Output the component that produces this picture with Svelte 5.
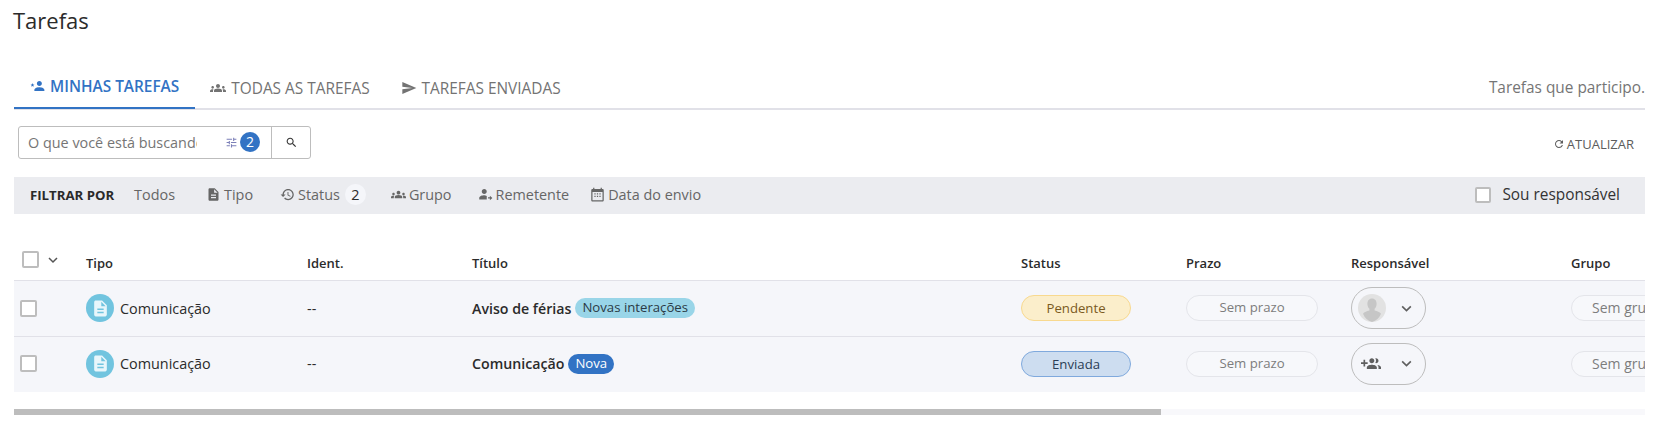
<script>
  const ICONS = {
    groups: 'M12 12.75c1.63 0 3.07.39 4.24.9 1.08.48 1.76 1.56 1.76 2.73V18H6v-1.61c0-1.18.68-2.26 1.76-2.73 1.17-.52 2.61-.91 4.24-.91zM4 13c1.1 0 2-.9 2-2s-.9-2-2-2-2 .9-2 2 .9 2 2 2zm1.13 1.1C4.76 14.04 4.39 14 4 14c-.99 0-1.93.21-2.78.58C.48 14.9 0 15.62 0 16.43V18h4.5v-1.61c0-.83.23-1.61.63-2.29zM20 13c1.1 0 2-.9 2-2s-.9-2-2-2-2 .9-2 2 .9 2 2 2zm4 3.43c0-.81-.48-1.53-1.22-1.85C21.93 14.21 20.99 14 20 14c-.39 0-.76.04-1.13.1.4.68.63 1.46.63 2.29V18H24v-1.57zM12 6c1.66 0 3 1.34 3 3s-1.34 3-3 3-3-1.34-3-3 1.34-3 3-3z',
    send: 'M2.01 21L23 12 2.01 3 2 10l15 2-15 2z',
    mine: 'M15 11c2.2 0 4-1.8 4-4s-1.8-4-4-4-4 1.8-4 4 1.8 4 4 4zm0 2c-2.7 0-8 1.3-8 4v2h16v-2c0-2.7-5.3-4-8-4zM4 6.5l.9 2.1 2.2.2-1.7 1.5.5 2.2L4 11.3l-1.9 1.2.5-2.2L.9 8.8l2.2-.2z',
    tune: 'M3 17v2h6v-2H3zM3 5v2h10V5H3zm10 16v-2h8v-2h-8v-2h-2v6h2zM7 9v2H3v2h4v2h2V9H7zm14 4v-2H11v2h10zm-6-4h2V7h4V5h-4V3h-2v6z',
    search: 'M15.5 14h-.79l-.28-.27C15.41 12.59 16 11.11 16 9.5 16 5.91 13.09 3 9.5 3S3 5.91 3 9.5 5.91 16 9.5 16c1.61 0 3.09-.59 4.23-1.57l.27.28v.79l5 4.99L20.49 19l-4.99-5zm-6 0C7.01 14 5 11.99 5 9.5S7.01 5 9.5 5 14 7.01 14 9.5 11.99 14 9.5 14z',
    refresh: 'M17.65 6.35C16.2 4.9 14.21 4 12 4c-4.42 0-7.99 3.58-7.99 8s3.57 8 7.99 8c3.73 0 6.84-2.55 7.73-6h-2.08c-.82 2.33-3.04 4-5.65 4-3.31 0-6-2.69-6-6s2.69-6 6-6c1.66 0 3.14.69 4.22 1.78L13 11h7V4l-2.35 2.35z',
    doc: 'M14 2H6c-1.1 0-1.99.9-1.99 2L4 20c0 1.1.89 2 1.99 2H18c1.1 0 2-.9 2-2V8l-6-6zm2 16H8v-2h8v2zm0-4H8v-2h8v2zm-3-5V3.5L18.5 9H13z',
    history: 'M13 3c-4.97 0-9 4.03-9 9H1l3.89 3.89.07.14L9 12H6c0-3.87 3.13-7 7-7s7 3.13 7 7-3.13 7-7 7c-1.93 0-3.68-.79-4.94-2.06l-1.42 1.42C8.27 19.99 10.51 21 13 21c4.97 0 9-4.03 9-9s-4.03-9-9-9zm-1 5v5l4.28 2.54.72-1.21-3.5-2.08V8H12z',
    sender: 'M10 11c2.2 0 4-1.8 4-4s-1.8-4-4-4-4 1.8-4 4 1.8 4 4 4zM10 13c-2.700 0-8 1.300-8 4v3h12v-5.600c-1.300-.9-2.800-1.400-4-1.400zM16 16.500h3V14l4 3.500-4 3.500v-2.500h-3z',
    calendar: 'M20 3h-1V1h-2v2H7V1H5v2H4c-1.1 0-2 .9-2 2v16c0 1.1.9 2 2 2h16c1.1 0 2-.9 2-2V5c0-1.1-.9-2-2-2zm0 18H4V8h16v13zM7 10h2v2H7zm4 0h2v2h-2zm4 0h2v2h-2zm-8 4h2v2H7zm4 0h2v2h-2zm4 0h2v2h-2z',
    groupAdd: 'M8 10H5V7H3v3H0v2h3v3h2v-3h3v-2zm10 1c1.66 0 2.99-1.34 2.99-3S19.66 5 18 5c-.32 0-.63.05-.91.13.57.81.9 1.79.9 2.87s-.34 2.05-.9 2.87c.28.08.59.13.91.13zm-5 0c1.66 0 2.99-1.34 2.99-3S14.66 5 13 5s-3 1.34-3 3 1.34 3 3 3zm6.62 2.16c.83.73 1.38 1.66 1.38 2.84v2h3v-2c0-1.54-2.37-2.49-4.38-2.84zM13 13c-2 0-6 1-6 3v2h12v-2c0-2-4-3-6-3z'
  };

  const tabs = [
    { label: 'MINHAS TAREFAS', icon: 'mine', active: true },
    { label: 'TODAS AS TAREFAS', icon: 'groups' },
    { label: 'TAREFAS ENVIADAS', icon: 'send' }
  ];

  const filters = [
    { label: 'Tipo', icon: 'doc', gap: 27 },
    { label: 'Status', icon: 'history', count: 2, gap: 25 },
    { label: 'Grupo', icon: 'groups', gap: 26 },
    { label: 'Remetente', icon: 'sender', gap: 21 },
    { label: 'Data do envio', icon: 'calendar' }
  ];

  const rows = [
    { title: 'Aviso de férias', badge: 'Novas interações', badgeKind: 'info', status: 'Pendente', statusKind: 'pending', avatar: true },
    { title: 'Comunicação', badge: 'Nova', badgeKind: 'new', status: 'Enviada', statusKind: 'sent', avatar: false }
  ];
</script>

{#snippet icon(name, size)}
  <svg class="icon" width={size} height={size} viewBox="0 0 24 24" fill="currentColor"><path d={ICONS[name]} /></svg>
{/snippet}

{#snippet chevron()}
  <svg class="chev" width="12" height="12" viewBox="0 0 12 12" fill="none" stroke="currentColor" stroke-width="1.5"><path d="M2 4l4 4 4-4" /></svg>
{/snippet}

<div class="page">
  <h1>Tarefas</h1>

  <div class="tabs">
    {#each tabs as t}
      <div class="tab" class:active={t.active}>
        {@render icon(t.icon, t.active ? 15 : 16)}
        <span>{t.label}</span>
      </div>
    {/each}
    <div class="tabs__hint">Tarefas que participo.</div>
  </div>

  <div class="toolbar">
    <div class="search">
      <div class="search__field">
        <span class="search__text">O que você está buscando?</span>
        <span class="search__tune">{@render icon('tune', 13)}</span>
        <span class="search__count">2</span>
      </div>
      <div class="search__btn">{@render icon('search', 13)}</div>
    </div>
    <div class="refresh">{@render icon('refresh', 12)}<span>ATUALIZAR</span></div>
  </div>

  <div class="filters">
    <strong>FILTRAR POR</strong>
    <span class="filters__all">Todos</span>
    {#each filters as f}
      <span class="filter" style="margin-right: {f.gap ?? 0}px">
        {@render icon(f.icon, 15)}
        <span>{f.label}</span>
        {#if f.count}<span class="filter__count">{f.count}</span>{/if}
      </span>
    {/each}
    <label class="filters__mine"><span class="check"></span>Sou responsável</label>
  </div>

  <div class="table">
    <div class="row head">
      <div class="cell cell--check"><span class="check check--head"></span>{@render chevron()}</div>
      <div class="cell">Tipo</div>
      <div class="cell">Ident.</div>
      <div class="cell">Título</div>
      <div class="cell">Status</div>
      <div class="cell">Prazo</div>
      <div class="cell">Responsável</div>
      <div class="cell">Grupo</div>
    </div>
    {#each rows as r}
      <div class="row body">
        <div class="cell cell--check"><span class="check"></span></div>
        <div class="cell tipo">
          <span class="tipo__icon">{@render icon('doc', 19)}</span>Comunicação
        </div>
        <div class="cell">--</div>
        <div class="cell titulo">
          <span class="titulo__text">{r.title}</span>
          <span class="badge badge--{r.badgeKind}">{r.badge}</span>
        </div>
        <div class="cell"><span class="pill status status--{r.statusKind}">{r.status}</span></div>
        <div class="cell"><span class="pill muted">Sem prazo</span></div>
        <div class="cell">
          <div class="owner">
            {#if r.avatar}
              <svg class="avatar" width="28" height="28" viewBox="0 0 28 28">
                <circle cx="14" cy="14" r="14" fill="#e2e2e2" />
                <path d="M14 4.500c3 0 4.600 2.400 4.600 5.200 0 2.200-.8 4-2 5.100v1.800c2.600.7 5 1.600 6.400 3.200A14 14 0 0 1 14 28a14 14 0 0 1-9-8.200c1.400-1.600 3.800-2.500 6.400-3.200v-1.800c-1.200-1.100-2-2.900-2-5.100 0-2.800 1.600-5.200 4.600-5.200z" fill="#c6c6c6" />
              </svg>
            {:else}
              <span class="owner__add">{@render icon('groupAdd', 20)}</span>
            {/if}
            {@render chevron()}
          </div>
        </div>
        <div class="cell"><span class="pill muted pill--group">Sem grupo</span></div>
      </div>
    {/each}
  </div>

  <div class="scrollbar"><div class="scrollbar__thumb"></div></div>
</div>

<style>
  :global(body) { margin: 0; background: #fff; }
  .page {
    width: 1631px;
    padding-left: 14px;
    font-family: "Open Sans", sans-serif;
    color: #2b2b2b;
    overflow: hidden;
    height: 421px;
  }
  .icon { flex-shrink: 0; display: block; }

  h1 {
    margin: 0 0 0 -1px;
    height: 66px;
    padding-top: 5px;
    box-sizing: border-box;
    font-size: 22px;
    line-height: 30px;
    font-weight: 400;
  }

  .tabs {
    display: flex;
    align-items: center;
    height: 44px;
    box-sizing: border-box;
    border-bottom: 2px solid #e1e1e8;
  }
  .tab {
    display: flex;
    align-items: center;
    gap: 5px;
    height: 44px;
    box-sizing: border-box;
    padding: 2px 16px 0 15px;
    font-size: 15.4px;
    color: #737373;
  }
  .tab.active {
    color: #3273c4;
    font-weight: 600;
    border-bottom: 2px solid #3273c4;
    padding: 0 16px 0 16px;
    gap: 5px;
  }
  .tabs__hint { margin-left: auto; font-size: 15.4px; color: #757575; padding-top: 1px; }

  .toolbar {
    display: flex;
    align-items: center;
    justify-content: space-between;
    margin: 16px 0 18px;
    padding: 0 11px 0 4px;
  }
  .search {
    display: flex;
    width: 293px;
    height: 33px;
    box-sizing: border-box;
    border: 1px solid #bdbdbd;
    border-radius: 3px;
  }
  .search__field {
    display: flex;
    align-items: center;
    width: 253px;
    padding: 0 0 1px 9px;
    box-sizing: border-box;
    border-right: 1px solid #bdbdbd;
  }
  .search__text {
    width: 169px;
    flex-shrink: 0;
    overflow: hidden;
    white-space: nowrap;
    font-size: 14.4px;
    color: #757575;
  }
  .search__tune { margin-left: 28px; color: #7b7fb8; }
  .search__count {
    margin-left: 2px;
    width: 20px;
    height: 20px;
    border-radius: 50%;
    background: #3273c4;
    color: #fff;
    font-size: 14px;
    line-height: 20px;
    text-align: center;
    flex-shrink: 0;
  }
  .search__btn { flex: 1; display: flex; align-items: center; justify-content: center; color: #333; }
  .refresh { display: flex; align-items: center; gap: 2px; margin-top: 3px; font-size: 13px; color: #5c5c5c; }

  .filters {
    display: flex;
    align-items: center;
    height: 37px;
    padding: 0 25px 2px 16px;
    box-sizing: border-box;
    background: #ebecf0;
    color: #666;
  }
  .filters strong { font-size: 13.2px; font-weight: 700; color: #2a2a2a; }
  .filters__all { margin: 0 31px 0 20px; font-size: 14.4px; }
  .filter { display: flex; align-items: center; gap: 3px; font-size: 14.4px; }
  .filter__count {
    width: 21px;
    height: 21px;
    margin-left: 2px;
    border-radius: 50%;
    background: #f5f6fa;
    color: #2b2b2b;
    line-height: 21px;
    text-align: center;
  }
  .filters__mine {
    margin-left: auto;
    display: flex;
    align-items: center;
    gap: 11px;
    font-size: 15.4px;
    color: #333;
  }

  .check {
    display: block;
    width: 16px;
    height: 16px;
    background: #fff;
    border: 2px solid #bdbdbd;
    border-radius: 2px;
    box-sizing: border-box;
  }

  .table { overflow: hidden; }
  .row {
    display: grid;
    grid-template-columns: 72px 221px 165px 549px 165px 165px 220px 200px;
    width: 1757px;
    align-items: center;
    box-sizing: border-box;
  }
  .cell { font-size: 14.4px; white-space: nowrap; min-width: 0; }
  .head {
    height: 67px;
    border-bottom: 1px solid #e1e1e8;
    padding-top: 32px;
    font-weight: 600;
  }
  .head .cell { font-size: 13px; }
  .head .cell--check { display: flex; align-items: center; gap: 8px; padding-left: 8px; margin-top: -7px; color: #555; }
  .head .check--head { width: 17px; height: 17px; }
  .body { height: 56px; padding-bottom: 1px; background: #f5f6fa; border-bottom: 1px solid #e1e1e8; }
  .body:last-child { height: 55px; padding-bottom: 2px; border-bottom: 0; }
  .body .cell--check { padding-left: 6px; }
  .body .check { width: 17px; height: 17px; }
  .tipo { display: flex; align-items: center; gap: 6px; }
  .tipo__icon {
    width: 28px;
    height: 28px;
    border-radius: 50%;
    background: #71c4df;
    color: #e8f6fb;
    display: flex;
    align-items: center;
    justify-content: center;
  }
  .titulo { display: flex; align-items: center; gap: 4px; }
  .titulo__text { font-weight: 600; font-size: 14.2px; }
  .badge {
    height: 20px;
    border-radius: 10px;
    padding: 0 7px;
    font-size: 13.2px;
    line-height: 19px;
  }
  .badge--info { background: #99d5e8; color: #2b3a45; }
  .badge--new { background: #3273c4; color: #fff; }
  .pill {
    display: block;
    height: 26px;
    box-sizing: border-box;
    border-radius: 13px;
    text-align: center;
    font-size: 13.2px;
    line-height: 24px;
    border: 1px solid;
  }
  .status { width: 110px; }
  .status--pending { background: #fbeecb; border-color: #f8d98f; color: #7a5a22; }
  .status--sent { background: #cdddf0; border-color: #7fa9dd; color: #2b3d55; }
  .muted { width: 132px; background: #f7f8fb; border-color: #e4e5ea; color: #7d7d7d; line-height: 23px; }
  .pill--group { text-align: left; padding-left: 20px; line-height: 24px; font-size: 14px; }
  .owner {
    display: flex;
    align-items: center;
    width: 75px;
    height: 42px;
    box-sizing: border-box;
    border: 1px solid #bdbdbd;
    border-radius: 21px;
    padding-left: 6px;
    color: #5f5f5f;
  }
  .avatar { flex-shrink: 0; margin-right: 14px; }
  .owner__add { margin-left: 3px; margin-right: 19px; }
  .owner .chev { width: 13px; height: 13px; }

  .scrollbar {
    width: 1631px;
    height: 6px;
    margin-top: 17px;
    background: #f8f8fb;
  }
  .scrollbar__thumb { width: 1147px; height: 6px; background: #bdbdbd; }
</style>
